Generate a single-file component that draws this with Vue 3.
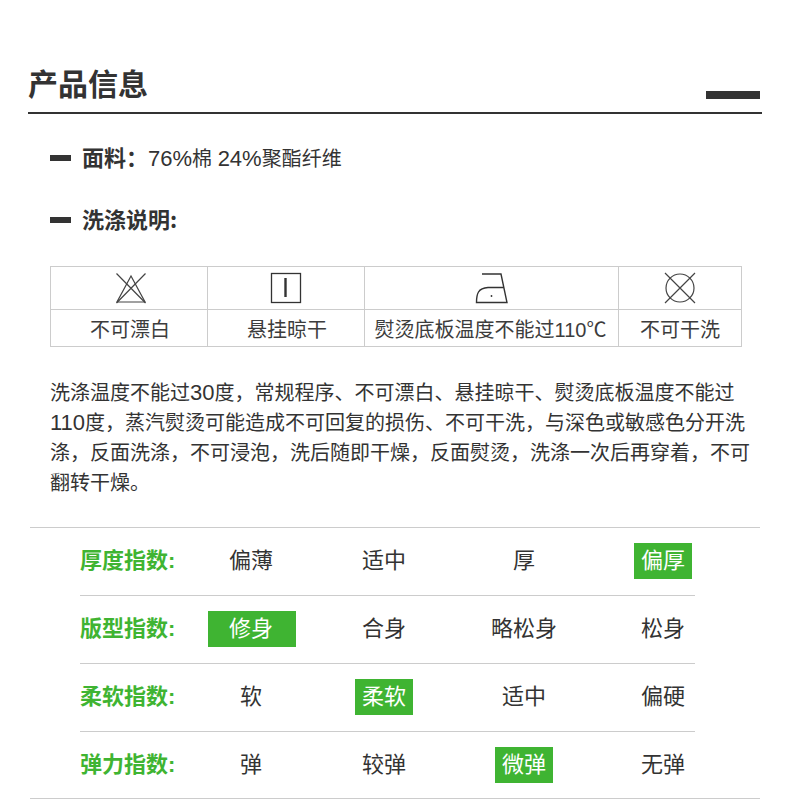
<template>
  <main class="page">
    <header class="head">
      <h1>产品信息</h1>
      <span class="head-bar"></span>
    </header>

    <section class="info">
      <div class="info-row">
        <span class="dash"></span>
        <p><b>面料：</b><span class="num">76%</span>棉 <span class="num">24%</span>聚酯纤维</p>
      </div>
      <div class="info-row second">
        <span class="dash"></span>
        <p><b>洗涤说明:</b></p>
      </div>
    </section>

    <div class="care">
      <div class="care-cell icon shift">
        <svg width="32" height="32" viewBox="0 0 32 32" fill="none" stroke="#444" stroke-width="1.2">
          <path d="M16 4 L2 30 H30 Z" />
          <path d="M1.5 1.5 L30.500 31 M30.500 1.500 L1.500 31" />
        </svg>
      </div>
      <div class="care-cell icon">
        <svg width="32" height="32" viewBox="0 0 32 32" fill="none" stroke="#333">
          <rect x="1.500" y="1.500" width="29" height="29" stroke-width="1.300" />
          <path d="M15.500 6 V25" stroke-width="2.400" />
        </svg>
      </div>
      <div class="care-cell icon">
        <svg width="34" height="32" viewBox="0 0 34 32" fill="none" stroke="#333" stroke-width="1.400">
          <path d="M7 2 H26 L32 30.500 H1.500 C1.500 22 3 16 13 15.500 H28.500" />
          <circle cx="16.500" cy="24" r="0.900" fill="#333" stroke="none" />
        </svg>
      </div>
      <div class="care-cell icon">
        <svg width="32" height="32" viewBox="0 0 32 32" fill="none" stroke="#444" stroke-width="1.200">
          <circle cx="16" cy="16" r="14" />
          <path d="M1 1 L31 31 M31 1 L1 31" />
        </svg>
      </div>
      <div class="care-cell shift">不可漂白</div>
      <div class="care-cell shift">悬挂晾干</div>
      <div class="care-cell pull">熨烫底板温度不能过110<span class="cjk">℃</span></div>
      <div class="care-cell">不可干洗</div>
    </div>

    <p class="desc">洗涤温度不能过<span class="num">30</span>度，常规程序、不可漂白、悬挂晾干、熨烫底板温度不能过<span class="num">110</span>度，蒸汽熨烫可能造成不可回复的损伤、不可干洗，与深色或敏感色分开洗涤，反面洗涤，不可浸泡，洗后随即干燥，反面熨烫，洗涤一次后再穿着，不可翻转干燥。</p>

    <section class="index">
      <div v-for="row in rows" :key="row.label" class="index-row">
        <div class="index-label">{{ row.label }}</div>
        <div
          v-for="(option, i) in row.options"
          :key="option"
          class="option"
          :class="[`option-${i}`, { active: i === row.active }]"
        >
          <span>{{ option }}</span>
        </div>
      </div>
    </section>
  </main>
</template>

<script setup>
const rows = [
  { label: '厚度指数:', options: ['偏薄', '适中', '厚', '偏厚'], active: 3 },
  { label: '版型指数:', options: ['修身', '合身', '略松身', '松身'], active: 0 },
  { label: '柔软指数:', options: ['软', '柔软', '适中', '偏硬'], active: 1 },
  { label: '弹力指数:', options: ['弹', '较弹', '微弹', '无弹'], active: 2 }
]
</script>

<style>
html, body { margin: 0; background: #fff; }
body { overflow: hidden; }
</style>

<style scoped>
.page {
  width: 790px;
  height: 799px;
  padding-top: 60px;
  box-sizing: border-box;
  overflow: hidden;
  color: #333;
  font-family: "Liberation Sans", "Noto Sans CJK SC", sans-serif;
}
.num {
  font-size: 22px;
  line-height: 1;
}
.cjk { font-family: "Noto Sans CJK SC", sans-serif; }
.head {
  display: flex;
  justify-content: space-between;
  align-items: flex-end;
  height: 52px;
  margin: 0 28px;
  padding-right: 2px;
  border-bottom: 2px solid #333;
}
.head h1 {
  margin: 0 0 3px;
  height: 48px;
  font-size: 30px;
  line-height: 48px;
  font-weight: 700;
}
.head-bar {
  width: 54px;
  height: 8px;
  margin-bottom: 13px;
  background: #333;
}
.info { padding: 29px 0 0 50px; }
.info-row {
  display: flex;
  align-items: center;
  gap: 11px;
  height: 30px;
}
.info-row.second { margin-top: 32px; }
.info-row p {
  margin: 2px 0 0;
  font-size: 20px;
  line-height: 30px;
}
.info-row b {
  font-size: 22px;
  line-height: 1;
  font-weight: 700;
  font-family: "Noto Sans CJK SC", sans-serif;
}
.dash {
  width: 21px;
  height: 6px;
  background: #333;
}
.care {
  display: grid;
  grid-template-columns: 157px 157px 254px 123px;
  grid-template-rows: 43px 37px;
  width: 692px;
  box-sizing: border-box;
  margin: 31px 0 0 50px;
  border-top: 1px solid #ccc;
  border-left: 1px solid #ccc;
}
.care-cell {
  display: flex;
  align-items: center;
  justify-content: center;
  box-sizing: border-box;
  border-right: 1px solid #ccc;
  border-bottom: 1px solid #ccc;
  font-size: 20px;
  color: #3c3c3c;
  white-space: nowrap;
}
.care-cell.shift { padding-left: 2px; }
.care-cell.icon.shift { padding-left: 4px; }
.care-cell.pull { padding-right: 2px; }
.desc {
  width: 700px;
  margin: 31px 0 0 50px;
  font-size: 20px;
  line-height: 30px;
}
.index {
  margin: 29px 30px 0;
  border-top: 1px solid #ccc;
  border-bottom: 1px solid #ccc;
}
.index-row {
  display: grid;
  grid-template-columns: 128px 88px 176px 104px 119px;
  align-items: center;
  box-sizing: border-box;
  width: 615px;
  height: 68px;
  margin-left: 50px;
  padding-bottom: 1px;
  border-bottom: 1px solid #ccc;
}
.index-row:last-child {
  height: 66px;
  padding-bottom: 0;
  border-bottom: 0;
}
.index-label {
  font-size: 22px;
  line-height: 36px;
  font-weight: 700;
  color: #3fb432;
  white-space: nowrap;
}
.option {
  display: flex;
  justify-content: center;
  font-size: 22px;
  white-space: nowrap;
}
.option span {
  height: 36px;
  padding: 0 7px;
  line-height: 36px;
}
.option-0 span {
  width: 100%;
  box-sizing: border-box;
  padding: 0 2px 0 0;
  text-align: center;
}
.option-3 { justify-self: end; width: 64px; }
.option.active span {
  background: #3fb432;
  color: #fff;
}
</style>
